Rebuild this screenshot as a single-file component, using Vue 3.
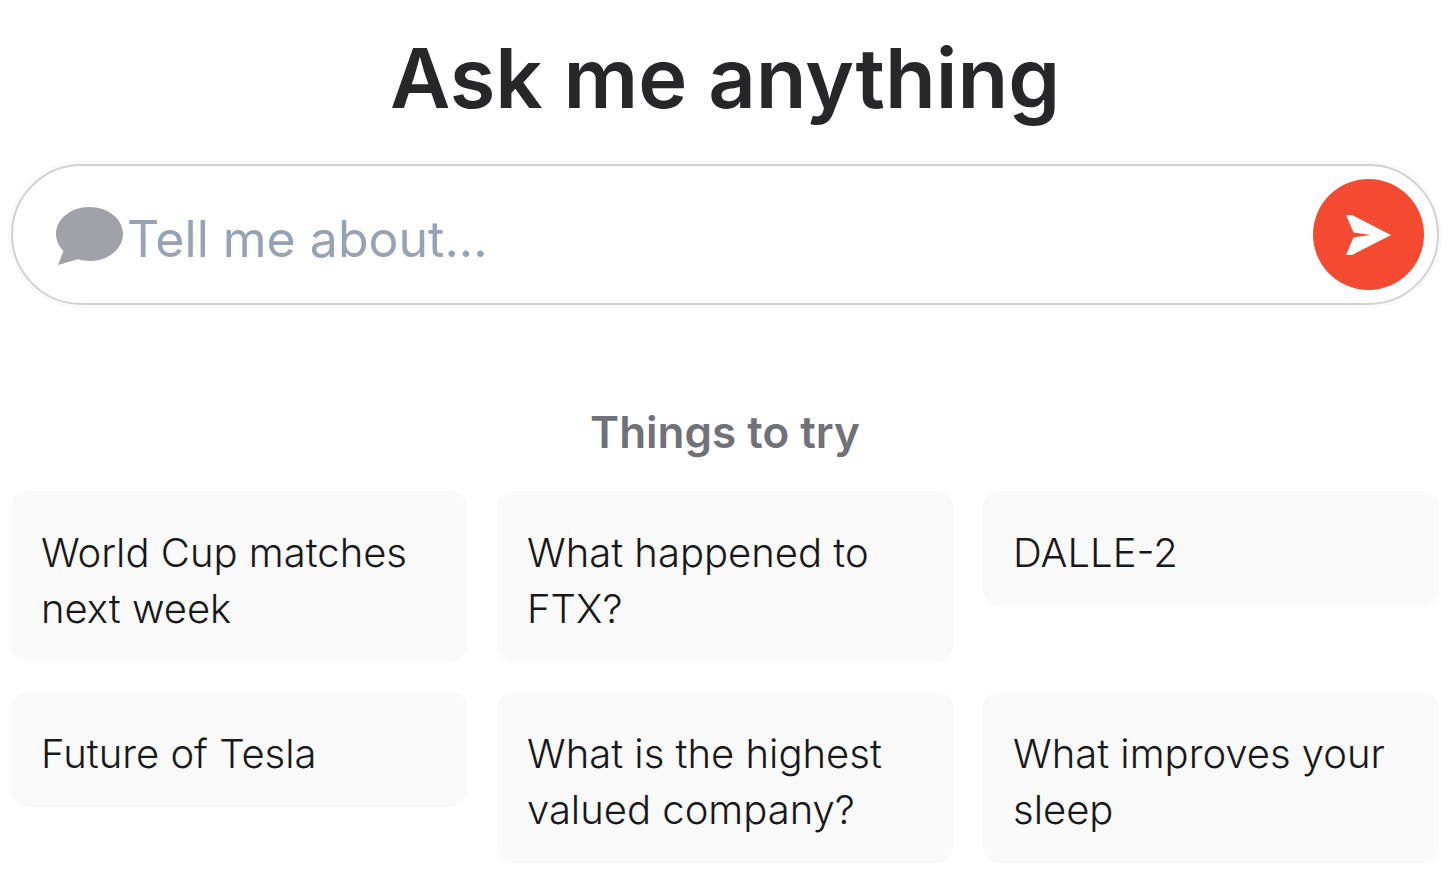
<script setup>
import { ref } from 'vue'

const question = ref('')
const suggestions = [
  'World Cup matches next week',
  'What happened to FTX?',
  'DALLE-2',
  'Future of Tesla',
  'What is the highest valued company?',
  'What improves your sleep',
]
</script>

<template>
  <main class="page">
    <h1 class="title">Ask me anything</h1>
    <form class="ask" @submit.prevent>
      <label class="ask-label" for="question" aria-label="Question">
        <svg class="bubble" viewBox="0.5 0 67 60" aria-hidden="true">
          <path d="M34 1C52.500 1 67.500 13 67.500 28S52.500 55 34 55C30 55 26 54.500 22.500 53.300L2.500 59L8 45C3.500 40.500 .5 34.500 .5 28C.5 13 15.500 1 34 1Z" />
        </svg>
      </label>
      <input id="question" v-model="question" class="field" type="text" placeholder="Tell me about..." />
      <button class="send" type="submit" aria-label="Send">
        <svg viewBox="0 0 46 40" aria-hidden="true">
          <path d="M0 0H6L45 20L6 40H0L7.500 22.300L25 20L7.500 17.400Z" />
        </svg>
      </button>
    </form>
    <h2 class="subtitle">Things to try</h2>
    <div class="cards">
      <button v-for="item in suggestions" :key="item" class="card" type="button">{{ item }}</button>
    </div>
  </main>
</template>

<style>
body {
  background: #fff;
}
</style>

<style scoped>
.page {
  box-sizing: border-box;
  padding: 28px 17px 10px 11px;
  font-family: Inter, "Open Sans", sans-serif;
  color: #18181b;
}
.title {
  margin: 0;
  font-size: 83px;
  line-height: 100px;
  font-weight: 600;
  text-align: center;
  color: #27272a;
}
.ask {
  display: flex;
  align-items: center;
  box-sizing: border-box;
  margin-top: 36px;
  padding: 13px 13px 13px 43px;
  border: 2px solid #d1d1d6;
  border-radius: 71px;
  box-shadow: 0 0 0 3px #fafafa;
}
.ask-label {
  display: flex;
  flex: none;
  padding-top: 3px;
}
.bubble {
  width: 67px;
  height: 60px;
  fill: #a1a1aa;
}
.field {
  flex: 1;
  min-width: 0;
  box-sizing: border-box;
  height: 80px;
  margin: 0;
  padding: 9px 4px 0;
  border: 0;
  outline: 0;
  background: transparent;
  font: 400 50px Inter, "Open Sans", sans-serif;
  color: #27272a;
}
.field::placeholder {
  color: #97a2b3;
  opacity: 1;
}
.send {
  display: flex;
  flex: none;
  align-items: center;
  justify-content: center;
  width: 111px;
  height: 111px;
  padding: 0;
  border: 0;
  border-radius: 50%;
  background: #f44a31;
  cursor: pointer;
}
.send svg {
  width: 46px;
  height: 40px;
  fill: #fff;
}
.subtitle {
  margin: 99px 0 31px;
  font-size: 44px;
  line-height: 56px;
  font-weight: 600;
  text-align: center;
  color: #71717a;
}
.cards {
  display: grid;
  grid-template-columns: repeat(3, minmax(0, 1fr));
  align-items: start;
  gap: 30px;
}
.card {
  padding: 34px 30px 25px;
  border: 0;
  border-radius: 16px;
  background: #fafafa;
  font: 300 40px/56px Inter, "Open Sans", sans-serif;
  text-align: left;
  color: #18181b;
  cursor: pointer;
}
</style>
